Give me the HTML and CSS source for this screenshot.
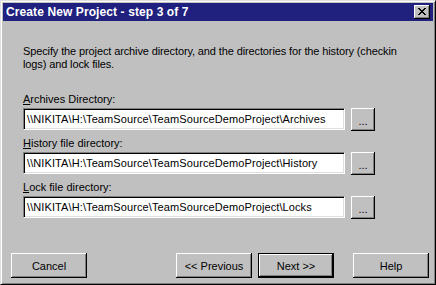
FILE: index.html
```html
<!DOCTYPE html>
<html>
<head>
<meta charset="utf-8">
<link rel="stylesheet" href="styles.css">
</head>
<body>
<div class="window">
  <div class="titlebar">
    <span class="title">Create New Project - step 3 of 7</span>
    <button class="close" aria-label="Close">
      <svg width="8" height="7" viewBox="0 0 8 7"><path d="M0 0h2v1h1v1h2V1h1V0h2v1H7v1H6v1H5v1h1v1h1v1h1v1H6V6H5V5H3v1H2v1H0V6h1V5h1V4h1V3H2V2H1V1H0z" fill="#000"/></svg>
    </button>
  </div>
  <div class="body">
    <p class="desc">Specify the project archive directory, and the directories for the history (checkin logs) and lock files.</p>
    <div class="field">
      <label class="label"><u>A</u>rchives Directory:</label>
      <div class="row">
        <div class="input">\\NIKITA\H:\TeamSource\TeamSourceDemoProject\Archives</div>
        <button class="btn browse">...</button>
      </div>
    </div>
    <div class="field">
      <label class="label"><u>H</u>istory file directory:</label>
      <div class="row">
        <div class="input">\\NIKITA\H:\TeamSource\TeamSourceDemoProject\History</div>
        <button class="btn browse">...</button>
      </div>
    </div>
    <div class="field">
      <label class="label"><u>L</u>ock file directory:</label>
      <div class="row">
        <div class="input">\\NIKITA\H:\TeamSource\TeamSourceDemoProject\Locks</div>
        <button class="btn browse">...</button>
      </div>
    </div>
  </div>
  <div class="footer">
    <button class="btn action">Cancel</button>
    <div class="spacer"></div>
    <button class="btn action">&lt;&lt; Previous</button>
    <button class="btn action default">Next &gt;&gt;</button>
    <button class="btn action help">Help</button>
  </div>
</div>
</body>
</html>
```
FILE: styles.css
```css
* { box-sizing: border-box; }
html, body { margin: 0; padding: 0; background: #c0c0c0; }
body { font-family: "Liberation Sans", Arial, sans-serif; font-size: 11px; color: #000; }

.window {
  width: 436px;
  height: 285px;
  background: #c0c0c0;
  border-top: 1px solid #dfdfdf;
  border-left: 1px solid #dfdfdf;
  border-right: 1px solid #000;
  border-bottom: 1px solid #000;
  box-shadow: inset 1px 1px #fff, inset -1px -1px #808080;
  padding: 2px;
  display: flex;
  flex-direction: column;
}

.titlebar {
  height: 18px;
  background: #20207f;
  display: flex;
  align-items: center;
  padding-left: 3px;
  padding-right: 3px;
}
.title {
  flex: 1;
  color: #fff;
  font-weight: bold;
  font-size: 12px;
  letter-spacing: 0.1px;
  line-height: 14px;
  white-space: nowrap;
}
.close {
  width: 16px;
  height: 14px;
  padding: 0;
  margin: 0;
  background: #c0c0c0;
  border: none;
  box-shadow: inset -1px -1px #000, inset 1px 1px #fff, inset -2px -2px #808080;
  display: flex;
  align-items: center;
  justify-content: center;
}
.close svg { display: block; margin-left: -1px; margin-top: -1px; }

.body {
  padding-left: 20px;
  display: flex;
  flex-direction: column;
}
.desc {
  margin: 24px 0 0 0;
  line-height: 13px;
  width: 395px;
  letter-spacing: -0.12px;
}
.field {
  display: flex;
  flex-direction: column;
}
.desc + .field { margin-top: 22px; }
.field + .field { margin-top: 6px; }
.label {
  line-height: 13px;
  height: 13px;
  margin-bottom: 2px;
}
.label u { text-decoration: underline; text-underline-offset: 1px; }
.row {
  display: flex;
  align-items: flex-start;
  gap: 6px;
}
.input {
  width: 322px;
  height: 22px;
  background: #fff;
  border-top: 1px solid #808080;
  border-left: 1px solid #808080;
  border-right: 1px solid #fff;
  border-bottom: 1px solid #fff;
  box-shadow: inset 1px 1px #000, inset -1px -1px #dfdfdf;
  padding: 0 3px;
  line-height: 20px;
  letter-spacing: 0.1px;
  white-space: nowrap;
  overflow: hidden;
}

.btn {
  font-family: "Liberation Sans", Arial, sans-serif;
  font-size: 11px;
  color: #000;
  background: #c0c0c0;
  border: none;
  margin: 0;
  padding: 0;
  box-shadow: inset -1px -1px #000, inset 1px 1px #fff, inset -2px -2px #808080;
}
.browse {
  width: 24px;
  height: 23px;
  line-height: 23px;
  padding-top: 2px;
}

.footer {
  margin-top: auto;
  margin-bottom: 4px;
  padding-left: 8px;
  padding-right: 4px;
  display: flex;
  align-items: center;
}
.spacer { flex: 1; }
.action {
  width: 76px;
  height: 25px;
}
.default {
  margin-left: 6px;
  box-shadow: inset 0 0 0 1px #000, inset -2px -2px #000, inset 2px 2px #fff, inset -3px -3px #808080;
}
.help { margin-left: 19px; }
```
